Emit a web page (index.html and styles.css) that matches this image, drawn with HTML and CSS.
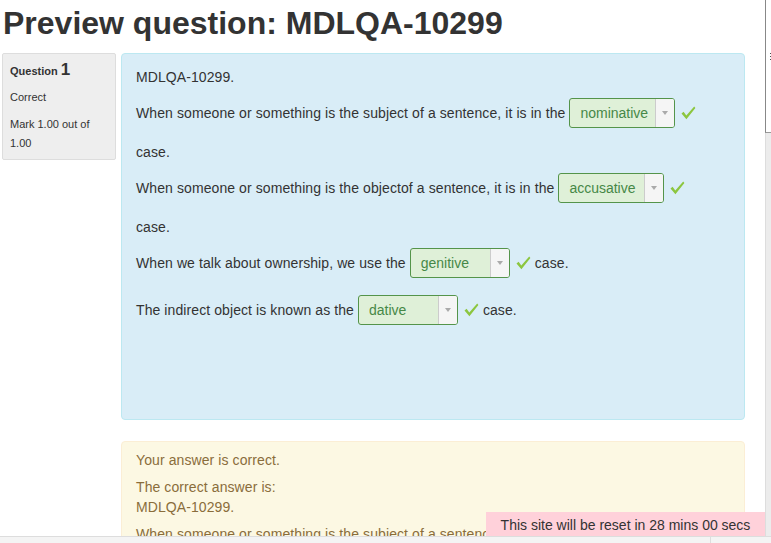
FILE: index.html
```html
<!DOCTYPE html>
<html lang="en">
<head>
    <meta charset="UTF-8">
    <meta name="viewport" content="width=device-width, initial-scale=1.0">
    <title>Preview question: MDLQA-10299</title>
    <link rel="stylesheet" href="styles.css">
</head>
<body>
    <div class="page">
        <h1 class="title">Preview question: MDLQA-10299</h1>

        <div class="que">
            <div class="info">
                <h3 class="no">Question <span class="qno">1</span></h3>
                <div class="state">Correct</div>
                <div class="grade">Mark 1.00 out of 1.00</div>
            </div>

            <div class="content">
                <div class="formulation">
                    <p>MDLQA-10299.</p>
                    <p>When someone or something is the subject of a sentence, it is in the
                        <span class="choice wide"><span class="val">nominative</span><span class="arrow"></span></span><svg class="tick" viewBox="0 0 16 16"><path d="M1.5 8.6 L3.6 6.8 L6.3 10.6 L14.2 1.6 L15.4 2.9 L6.4 14.2 Z"/></svg> case.</p>
                    <p>When someone or something is the objectof a sentence, it is in the
                        <span class="choice wide"><span class="val">accusative</span><span class="arrow"></span></span><svg class="tick" viewBox="0 0 16 16"><path d="M1.5 8.6 L3.6 6.8 L6.3 10.6 L14.2 1.6 L15.4 2.9 L6.4 14.2 Z"/></svg> case.</p>
                    <p>When we talk about ownership, we use the
                        <span class="choice"><span class="val">genitive</span><span class="arrow"></span></span><svg class="tick" viewBox="0 0 16 16"><path d="M1.5 8.6 L3.6 6.8 L6.3 10.6 L14.2 1.6 L15.4 2.9 L6.4 14.2 Z"/></svg> case.</p>
                    <p>The indirect object is known as the
                        <span class="choice"><span class="val">dative</span><span class="arrow"></span></span><svg class="tick" viewBox="0 0 16 16"><path d="M1.5 8.6 L3.6 6.8 L6.3 10.6 L14.2 1.6 L15.4 2.9 L6.4 14.2 Z"/></svg> case.</p>
                </div>

                <div class="outcome">
                    <p>Your answer is correct.</p>
                    <p>The correct answer is:<br>MDLQA-10299.</p>
                    <p>When someone or something is the subject of a sentence, it is in the [nominative] case.</p>
                    <p>When someone or something is the objectof a sentence, it is in the [accusative] case.</p>
                </div>
            </div>
        </div>
    </div>

    <!-- reset notice -->
    <div class="reset-notice">This site will be reset in 28 mins 00 secs</div>

    <div class="vbar"><div class="vthumb"><span class="grip">&#8942;</span></div></div>
    <div class="hbar"><div class="hthumb"></div></div>
</body>
</html>
```

FILE: styles.css
```css
body {
    margin: 0;
    padding: 0;
    font-family: "Liberation Sans", Arial, sans-serif;
    font-size: 14px;
    line-height: 20px;
    color: #333;
    background-color: #fff;
    overflow: hidden;
}
.page {
    padding: 0 0 0 2px;
}
.title {
    margin: 0;
    padding: 3px 0 0 1px;
    font-size: 32px;
    line-height: 40px;
    font-weight: bold;
    color: #333;
}
.que {
    display: flex;
    gap: 5px;
    width: 743px;
    margin-top: 10px;
    align-items: flex-start;
}
.info {
    width: 114px;
    height: 107px;
    box-sizing: border-box;
    padding: 6px 7px;
    background-color: #eee;
    border: 1px solid #ddd;
    border-radius: 2px;
    font-size: 11px;
    line-height: 19px;
}
.info .no {
    margin: 0 0 7px;
    font-size: 11px;
    line-height: 19px;
}
.info .qno {
    font-size: 17px;
}
.info .state {
    margin-bottom: 8px;
}
.content {
    flex: 1;
}
.formulation {
    height: 367px;
    box-sizing: border-box;
    padding: 9px 30px 8px 14px;
    background-color: #d9edf7;
    border: 1px solid #bce8f1;
    border-radius: 4px;
    letter-spacing: 0.09px;
}
.formulation p {
    margin: 0 0 7px;
    line-height: 28px;
}
.choice {
    display: inline-flex;
    width: 100px;
    height: 30px;
    box-sizing: border-box;
    margin: 0 0 10px;
    vertical-align: baseline;
    background-color: #dff0d8;
    border: 1px solid #54944a;
    border-radius: 3px;
    overflow: hidden;
    letter-spacing: 0;
}
.choice.wide {
    width: 106px;
}
.choice .val {
    flex: 1;
    padding-left: 10px;
    line-height: 28px;
    color: #468847;
}
.choice .arrow {
    position: relative;
    width: 18px;
    background-color: #f5f5f5;
    border-left: 1px solid #ccc;
}
.choice .arrow::after {
    content: "";
    position: absolute;
    left: 6px;
    top: 12px;
    border-left: 3px solid transparent;
    border-right: 3px solid transparent;
    border-top: 4px solid #aaa;
}
.tick {
    width: 16px;
    height: 16px;
    margin-left: 5px;
    vertical-align: -3px;
    fill: #8cc63f;
}
.outcome {
    margin-top: 21px;
    padding: 8px 14px;
    background-color: #fcf8e3;
    border: 1px solid #fbeed5;
    border-radius: 4px;
    color: #8a6d3b;
    letter-spacing: 0.09px;
}
.outcome p {
    margin: 0 0 7px;
}
.reset-notice {
    position: fixed;
    right: 6px;
    bottom: 6px;
    width: 279px;
    height: 25px;
    box-sizing: border-box;
    padding-top: 3px;
    text-align: center;
    background-color: #ffd1da;
    color: #333;
}
.vbar {
    position: fixed;
    top: 0;
    right: 0;
    bottom: 6px;
    width: 5px;
    background-color: #ececec;
    border-left: 1px solid #ddd;
}
.vthumb {
    height: 132px;
    background-color: #fff;
    border-left: 1px solid #888;
    border-bottom: 1px solid #999;
    margin-left: -1px;
    position: relative;
}
.grip {
    position: absolute;
    left: 0;
    top: 52px;
    font-size: 9px;
    line-height: 10px;
    color: #444;
}
.hbar {
    position: fixed;
    left: 0;
    right: 0;
    bottom: 0;
    height: 6px;
    background-color: #f4f4f4;
    border-top: 1px solid #ddd;
}
.hthumb {
    position: absolute;
    left: 710px;
    top: 0;
    bottom: 0;
    border-left: 1px solid #ddd;
}
```
